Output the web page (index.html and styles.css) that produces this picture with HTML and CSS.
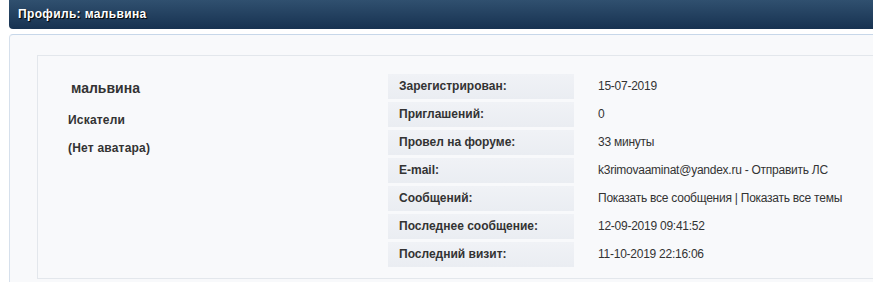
FILE: index.html
```html
<!DOCTYPE html>
<html lang="ru">

<head>
  <meta charset="UTF-8" />
  <title>Профиль: мальвина</title>
  <link rel="stylesheet" href="styles.css">
</head>

<body>
  <div class="page">
    <div class="cat-head">Профиль: мальвина</div>

    <div class="panel">
      <div class="profile-box">
        <div class="profile-side">
          <div class="user-name">мальвина</div>
          <div class="user-line">Искатели</div>
          <div class="user-line">(Нет аватара)</div>
        </div>

        <div class="profile-info">
          <div class="info-label">Зарегистрирован:</div>
          <div class="info-value">15-07-2019</div>

          <div class="info-label">Приглашений:</div>
          <div class="info-value">0</div>

          <div class="info-label">Провел на форуме:</div>
          <div class="info-value">33 минуты</div>

          <div class="info-label">E-mail:</div>
          <div class="info-value"><a href="#">k3rimovaaminat@yandex.ru</a> - <a href="#">Отправить ЛС</a></div>

          <div class="info-label">Сообщений:</div>
          <div class="info-value"><a href="#">Показать все сообщения</a> | <a href="#">Показать все темы</a></div>

          <div class="info-label">Последнее сообщение:</div>
          <div class="info-value">12-09-2019 09:41:52</div>

          <div class="info-label">Последний визит:</div>
          <div class="info-value">11-10-2019 22:16:06</div>
        </div>
      </div>
    </div>
  </div>
</body>

</html>
```

FILE: styles.css
```css
html,
body,
div {
  margin: 0;
  padding: 0;
}

body {
  background: #fff;
  font-family: "Liberation Sans", Arial, sans-serif;
  font-size: 12px;
  color: #333;
  overflow: hidden;
}

.page {
  width: 900px;
  padding-left: 9px;
}

.cat-head {
  height: 29px;
  line-height: 29px;
  padding-left: 9px;
  background: linear-gradient(#30506f, #173251);
  border-bottom-left-radius: 4px;
  color: #fff;
  font-weight: bold;
  letter-spacing: 0.35px;
  text-shadow: 1px 1px 1px #000;
}

.panel {
  margin-top: 5px;
  padding: 20px 0 40px 27px;
  background: #f8f9fb;
  border-top: 1px solid #c7d7e9;
  border-left: 1px solid #d6e0ec;
  border-top-left-radius: 4px;
}

.profile-box {
  display: flex;
  border: 1px solid #e3e7ec;
  border-right: 0;
  padding: 18px 0 11px 0;
}

.profile-side {
  width: 350px;
  padding-top: 1px;
}

.user-name {
  padding-left: 33px;
  line-height: 26px;
  margin-bottom: 5px;
  font-size: 14px;
  font-weight: bold;
}

.user-line {
  padding-left: 30px;
  line-height: 28px;
  font-weight: bold;
  letter-spacing: 0.2px;
}

.profile-info {
  display: grid;
  grid-template-columns: 186px auto;
  grid-auto-rows: 25px;
  row-gap: 3px;
  align-self: flex-start;
}

.info-label {
  padding-left: 11px;
  line-height: 25px;
  font-weight: bold;
  background: linear-gradient(#f0f2f6, #eaedf2);
}

.info-value {
  padding-left: 24px;
  line-height: 25px;
  letter-spacing: -0.25px;
}

.info-value a {
  color: #333;
  text-decoration: none;
}
```
